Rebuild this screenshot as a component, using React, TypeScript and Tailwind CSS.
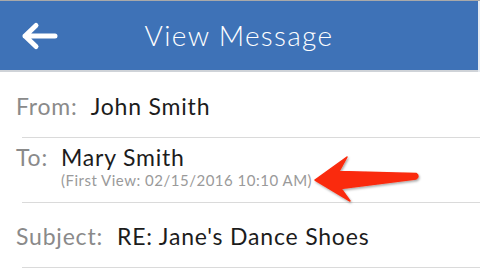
import React from "react";

export default function App() {
  return (
    <div
      className="relative w-[480px] h-[271px] overflow-hidden bg-white"
      style={{ fontFamily: "Lato, 'Noto Sans', sans-serif" }}
    >
      <div className="flex h-[72px] border-t border-[#a9a9a9]">
        <div className="flex-1 flex flex-col">
          <div className="relative flex items-center justify-center h-[69px] bg-[#3e72b7]">
            <svg
              className="absolute left-0 top-0"
              width="80"
              height="69"
              viewBox="0 0 80 69"
            >
              <path
                d="M55 35 H25 M36 24.5 L25 35 L36 45.5"
                fill="none"
                stroke="#ffffff"
                strokeWidth="5"
                strokeLinecap="round"
                strokeLinejoin="round"
              />
            </svg>
            <span className="text-white text-[28px] font-light leading-none tracking-[1.3px] -mt-[2px]">
              View Message
            </span>
          </div>
          <div className="h-[2px] bg-[#cfd3d8]" />
        </div>
        <div className="w-[2px] bg-[#e6ebf1]" />
      </div>

      <div className="h-[65px] flex items-center pl-4 text-[23px] leading-[28px] tracking-[0.8px] gap-[13px] pt-[2px]">
        <span className="text-[#8a8a8a]">From:</span>
        <span className="text-[#1c1c1c]">John Smith</span>
      </div>
      <div className="ml-[22px] h-px bg-[#dadada]" />

      <div className="h-[64px] flex pl-4 pt-[5px] gap-[13px]">
        <span className="text-[#8a8a8a] text-[23px] leading-[28px] tracking-[0.8px]">To:</span>
        <div className="flex flex-col">
          <span className="text-[#1c1c1c] text-[23px] leading-[28px] tracking-[0.8px]">Mary Smith</span>
          <span className="text-[#9a9a9a] text-[15px] leading-[18px] tracking-[0.5px]">
            (First View: 02/15/2016 10:10 AM)
          </span>
        </div>
      </div>
      <div className="ml-[22px] h-px bg-[#dadada]" />

      <div className="h-[64px] flex items-center pl-4 text-[23px] leading-[28px] tracking-[0.8px] gap-[14px] pt-[2px]">
        <span className="text-[#8a8a8a]">Subject:</span>
        <span className="text-[#1c1c1c]">RE: Jane's Dance Shoes</span>
      </div>
      <div className="ml-[22px] h-px bg-[#dadada]" />

      <svg
        className="absolute left-0 top-0 pointer-events-none"
        width="480"
        height="271"
        viewBox="0 0 480 271"
      >
        <defs>
          <filter id="sh" x="-20%" y="-50%" width="140%" height="200%">
            <feDropShadow dx="1" dy="1.5" stdDeviation="1.2" floodColor="#000" floodOpacity="0.35" />
          </filter>
        </defs>
        <path
          d="M315 180 L347 157 L339 171.5 L416 173.5 Q420 176 416 179 L341 188.5 L350 201 Z"
          fill="#fa2a0c"
          stroke="#fa2a0c"
          strokeWidth="1.5"
          strokeLinejoin="round"
          filter="url(#sh)"
        />
      </svg>
    </div>
  );
}
